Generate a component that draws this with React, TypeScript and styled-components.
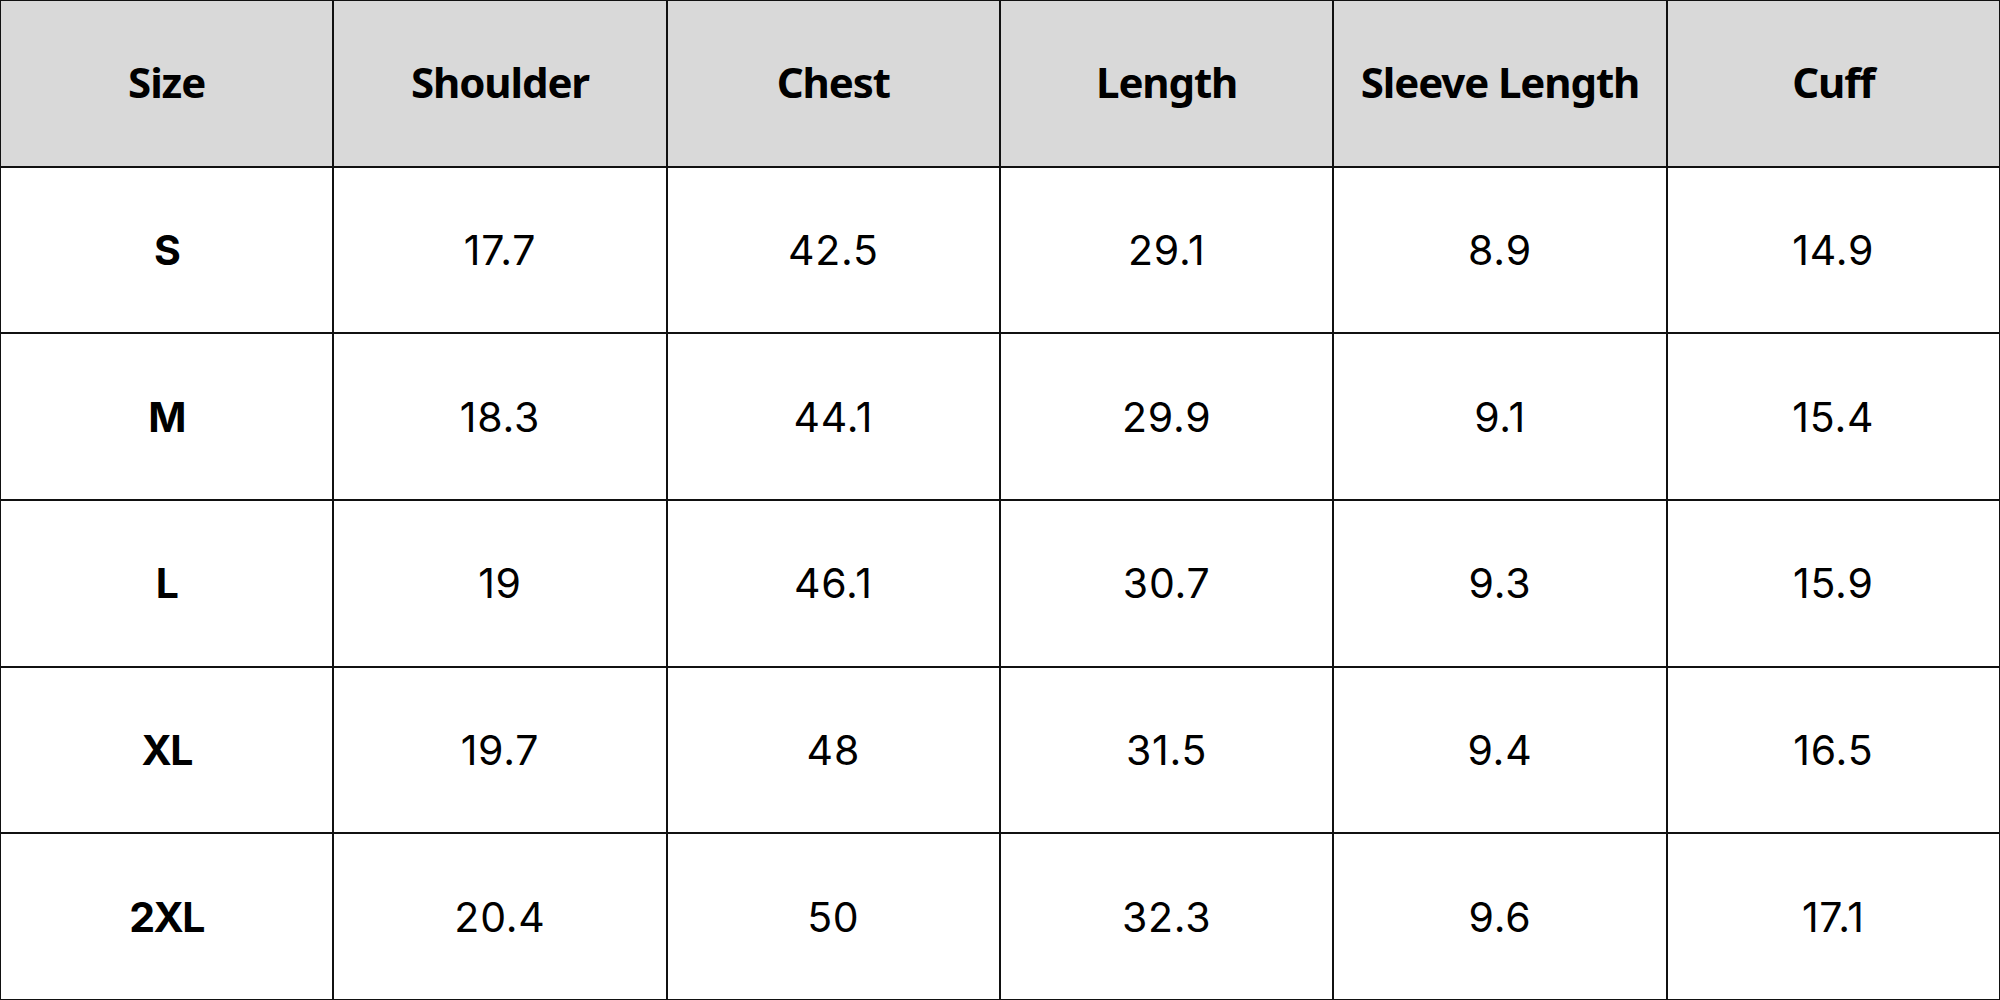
import React from "react";
import styled, { createGlobalStyle } from "styled-components";

const Global = createGlobalStyle`
  html, body { margin: 0; padding: 0; background: #ffffff; }
  * { box-sizing: border-box; }
`;

const Grid = styled.div`
  width: 2000px;
  height: 1000px;
  display: grid;
  grid-template-columns: repeat(6, 1fr);
  grid-template-rows: repeat(6, 1fr);
  background: #ffffff;
`;

const Cell = styled.div`
  border: 1px solid #111111;
  display: flex;
  align-items: center;
  justify-content: center;
  color: #000000;
  white-space: nowrap;
`;

const HeadCell = styled(Cell)`
  background: #d9d9d9;
  font-family: "Noto Sans", "Open Sans", sans-serif;
  font-weight: 700;
  font-size: 42px;
  letter-spacing: -1.1px;
  padding-bottom: 4px;
`;

const SizeCell = styled(Cell)`
  background: #ffffff;
  font-family: Inter, "Noto Sans", sans-serif;
  font-weight: 700;
  font-size: 41px;
  letter-spacing: -1.5px;
`;

const ValueCell = styled(Cell)`
  background: #ffffff;
  font-family: Inter, "Noto Sans", sans-serif;
  font-weight: 400;
  font-size: 41px;
  letter-spacing: 0.8px;
`;

const headers = ["Size", "Shoulder", "Chest", "Length", "Sleeve Length", "Cuff"];
const rows = [
  ["S", "17.7", "42.5", "29.1", "8.9", "14.9"],
  ["M", "18.3", "44.1", "29.9", "9.1", "15.4"],
  ["L", "19", "46.1", "30.7", "9.3", "15.9"],
  ["XL", "19.7", "48", "31.5", "9.4", "16.5"],
  ["2XL", "20.4", "50", "32.3", "9.6", "17.1"],
];

export default function App() {
  return (
    <>
      <Global />
      <Grid>
        {headers.map((h) => (
          <HeadCell key={h}>{h}</HeadCell>
        ))}
        {rows.map((r) =>
          r.map((v, i) =>
            i === 0 ? (
              <SizeCell key={r[0] + i}>{v}</SizeCell>
            ) : (
              <ValueCell key={r[0] + i}>{v}</ValueCell>
            )
          )
        )}
      </Grid>
    </>
  );
}
